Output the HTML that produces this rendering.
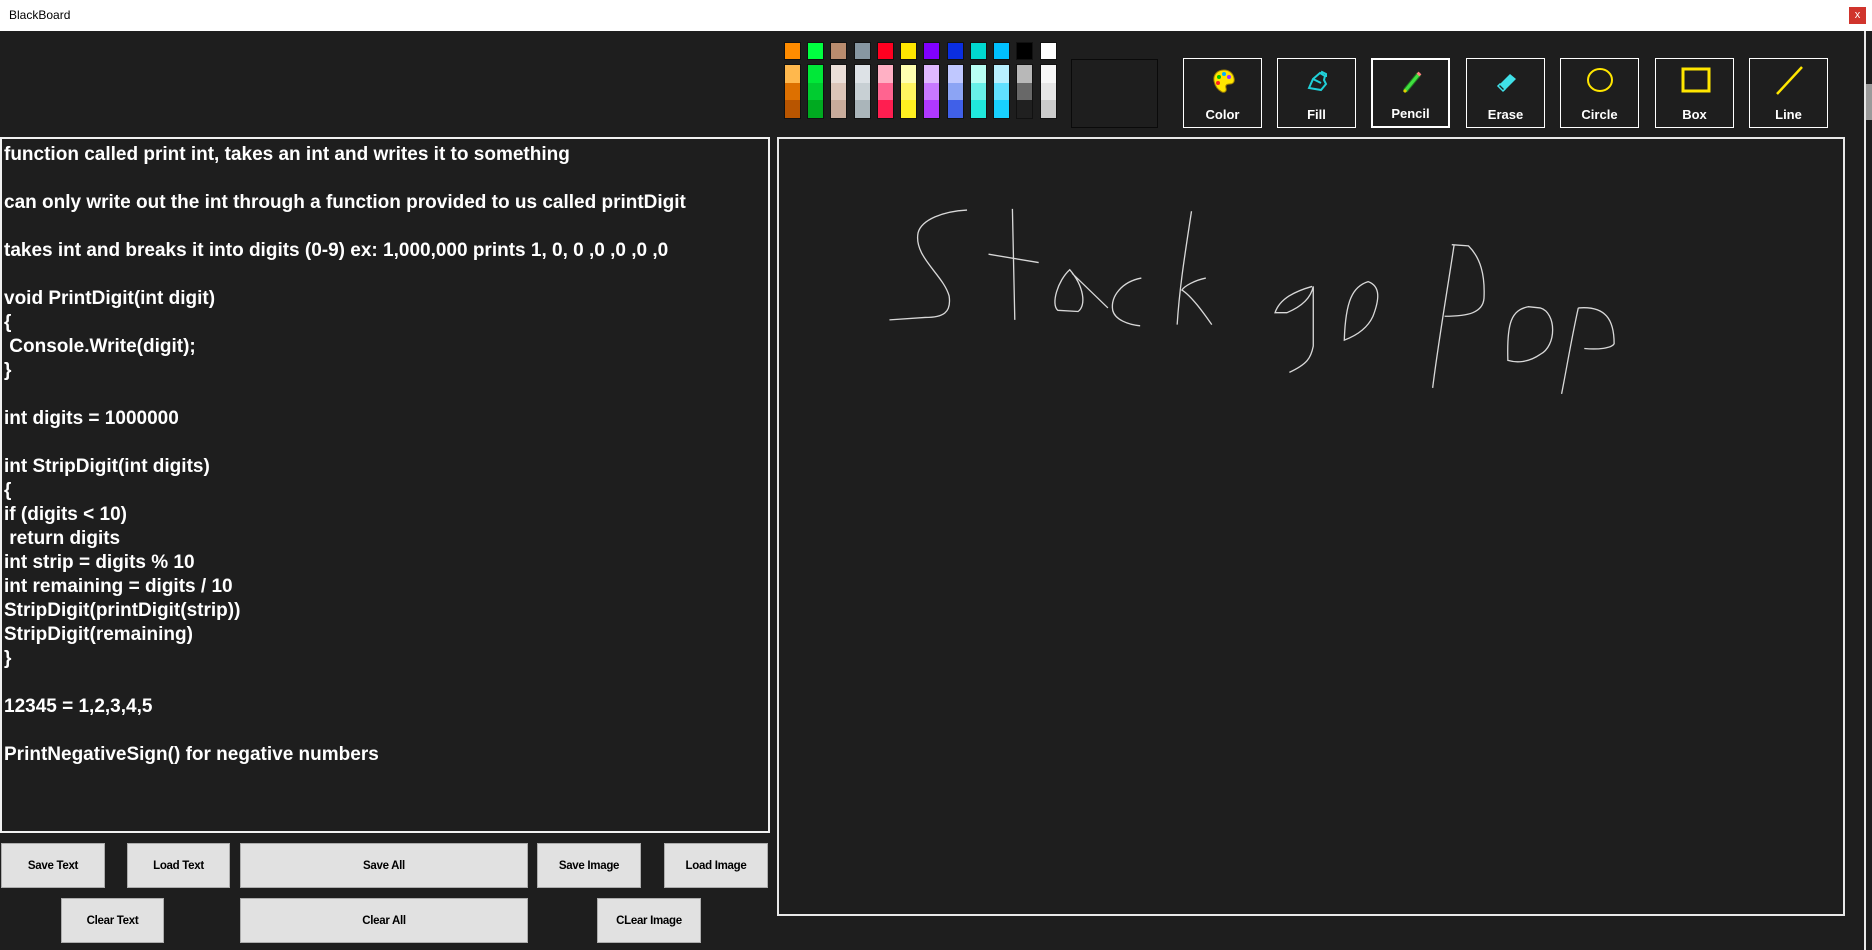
<!DOCTYPE html>
<html><head><meta charset="utf-8"><style>
*{margin:0;padding:0;box-sizing:border-box}
body{width:1872px;height:950px;background:#1e1e1e;position:relative;overflow:hidden;font-family:"Liberation Sans",sans-serif}
.a{position:absolute}
#title{left:0;top:0;width:1872px;height:31px;background:#fff;font-size:12px;color:#000;line-height:31px;padding-left:9px}
#close{left:1849px;top:7px;width:17px;height:17px;background:#d0342c;color:#fff;font-size:11px;line-height:16px;text-align:center}
.sw{position:absolute;width:17px;border:1px solid #111}
.bar{position:absolute;width:17px;height:55px;top:64px;border:1px solid #111;display:flex;flex-direction:column}
.bar i{flex:1;display:block}
.tool{position:absolute;top:58px;width:79px;height:70px;border:1px solid #fff;color:#fff;font-weight:bold;font-size:13px;text-align:center}
.tool span{position:absolute;left:0;right:0;bottom:5px}
.tool svg{position:absolute;left:25px;top:7px}
#txt{left:0;top:137px;width:770px;height:696px;border:2px solid #f0f0f0;color:#fff;font-weight:bold;font-size:19px;line-height:24px;padding:4px 0 0 2px;white-space:pre}
#cv{left:777px;top:137px;width:1068px;height:779px;border:2px solid #e8e8e8}
.btn{position:absolute;background:#e1e1e1;border:1px solid #adadad;font-size:11.5px;font-weight:bold;color:#000;display:flex;align-items:center;justify-content:center;letter-spacing:-0.3px}
</style></head><body>
<div class="a" id="title">BlackBoard</div>
<div class="a" id="close">x</div>

<div class="sw" style="left:784px;top:42px;height:18px;background:#ff8c00"></div>
<div class="sw" style="left:807px;top:42px;height:18px;background:#00ff40"></div>
<div class="sw" style="left:830px;top:42px;height:18px;background:#b98c6e"></div>
<div class="sw" style="left:854px;top:42px;height:18px;background:#8797a2"></div>
<div class="sw" style="left:877px;top:42px;height:18px;background:#ff0020"></div>
<div class="sw" style="left:900px;top:42px;height:18px;background:#ffe600"></div>
<div class="sw" style="left:923px;top:42px;height:18px;background:#8000ff"></div>
<div class="sw" style="left:947px;top:42px;height:18px;background:#0a2ee0"></div>
<div class="sw" style="left:970px;top:42px;height:18px;background:#00d8d0"></div>
<div class="sw" style="left:993px;top:42px;height:18px;background:#00c0ff"></div>
<div class="sw" style="left:1016px;top:42px;height:18px;background:#000"></div>
<div class="sw" style="left:1040px;top:42px;height:18px;background:#fff"></div>

<div class="bar" style="left:784px"><i style="background:#ffb84d"></i><i style="background:#dd7000"></i><i style="background:#b85500"></i></div>
<div class="bar" style="left:807px"><i style="background:#00e838"></i><i style="background:#00cc30"></i><i style="background:#00aa20"></i></div>
<div class="bar" style="left:830px"><i style="background:#ebdfd8"></i><i style="background:#dcc5b8"></i><i style="background:#c8ab9b"></i></div>
<div class="bar" style="left:854px"><i style="background:#dde2e6"></i><i style="background:#c8d0d4"></i><i style="background:#aab5ba"></i></div>
<div class="bar" style="left:877px"><i style="background:#ffb0c4"></i><i style="background:#ff6490"></i><i style="background:#ff1e50"></i></div>
<div class="bar" style="left:900px"><i style="background:#ffffb0"></i><i style="background:#fff560"></i><i style="background:#fff020"></i></div>
<div class="bar" style="left:923px"><i style="background:#e0b8ff"></i><i style="background:#c878ff"></i><i style="background:#b038ff"></i></div>
<div class="bar" style="left:947px"><i style="background:#c0c8ff"></i><i style="background:#8ca4f4"></i><i style="background:#4060e8"></i></div>
<div class="bar" style="left:970px"><i style="background:#b8fff4"></i><i style="background:#68f0e8"></i><i style="background:#20e8dc"></i></div>
<div class="bar" style="left:993px"><i style="background:#b8f0ff"></i><i style="background:#60e0ff"></i><i style="background:#18d0ff"></i></div>
<div class="bar" style="left:1016px"><i style="background:#b8b8b8"></i><i style="background:#686868"></i><i style="background:#202020"></i></div>
<div class="bar" style="left:1040px"><i style="background:#f8f8f8"></i><i style="background:#e6e6e6"></i><i style="background:#cccccc"></i></div>

<div class="a" style="left:1071px;top:59px;width:87px;height:69px;border:1px solid #0a0a0a"></div>

<div class="tool" style="left:1183px"><svg width="30" height="30" viewBox="0 0 30 30"><path d="M15 4C8 4 4 9 5 15c1 5 4 9 8 11 3 1 5-1 4-4s1-4 4-4 5-2 4-6c-1-5-5-8-10-8z" fill="#ffe600" stroke="#a08000" stroke-width="1"/><circle cx="10" cy="11" r="2" fill="#00c000"/><circle cx="15" cy="8" r="2" fill="#00b0ff"/><circle cx="20" cy="11" r="2" fill="#a030ff"/><circle cx="9" cy="17" r="2" fill="#ff2020"/></svg><span>Color</span></div>
<div class="tool" style="left:1277px"><svg width="30" height="30" viewBox="0 0 30 30" fill="none" stroke="#20d0d8" stroke-width="2"><path d="M6 22l4-9 7-6 5 3-1 4 2 4-5 6-6-1z"/><path d="M10 13l8 4M18 8l1-2 4 2 0 3"/></svg><span>Fill</span></div>
<div class="tool" style="left:1371px;border-width:2px"><svg width="30" height="30" viewBox="0 0 30 30"><path d="M7 24L21 7" stroke="#208020" stroke-width="5"/><path d="M7 24L21 7" stroke="#40e040" stroke-width="3"/><path d="M20 8l2-2" stroke="#ff8080" stroke-width="4"/><path d="M6 25l2-2" stroke="#e0d000" stroke-width="3"/></svg><span>Pencil</span></div>
<div class="tool" style="left:1466px"><svg width="30" height="30" viewBox="0 0 30 30"><path d="M6 20l12-12 6 5-12 12z" fill="#40e0e8"/><path d="M6 20l5 5 2-2-5-5z" fill="#1e1e1e" stroke="#40e0e8" stroke-width="1.5"/></svg><span>Erase</span></div>
<div class="tool" style="left:1560px"><svg width="30" height="30" viewBox="0 0 30 30"><ellipse cx="14" cy="14" rx="12" ry="11" fill="none" stroke="#ffe600" stroke-width="2"/></svg><span>Circle</span></div>
<div class="tool" style="left:1655px"><svg width="30" height="30" viewBox="0 0 30 30"><rect x="2" y="3" width="26" height="22" fill="none" stroke="#ffe600" stroke-width="3"/></svg><span>Box</span></div>
<div class="tool" style="left:1749px"><svg width="30" height="30" viewBox="0 0 30 30"><path d="M2 28L27 1" stroke="#ffe600" stroke-width="2.5"/></svg><span>Line</span></div>

<div class="a" id="txt">function called print int, takes an int and writes it to something

can only write out the int through a function provided to us called printDigit

takes int and breaks it into digits (0-9) ex: 1,000,000 prints 1, 0, 0 ,0 ,0 ,0 ,0

void PrintDigit(int digit)
{
 Console.Write(digit);
}

int digits = 1000000

int StripDigit(int digits)
{
if (digits &lt; 10)
 return digits
int strip = digits % 10
int remaining = digits / 10
StripDigit(printDigit(strip))
StripDigit(remaining)
}

12345 = 1,2,3,4,5

PrintNegativeSign() for negative numbers</div>

<div class="a" id="cv"></div>
<svg class="a" style="left:0;top:0" width="1872" height="950" viewBox="0 0 1568 796" preserveAspectRatio="none" fill="none" stroke="#d8d8d8" stroke-width="1.1">
<path d="M810 176C790 177 772 184 769 195C765 215 790 230 795 248C797 262 790 266 775 266L745 268"/>
<path d="M848 175L850 268M828 213L870 220"/>
<path d="M896 226C886 235 880 255 886 260L903 261C910 256 908 240 896 226ZM898 229L928 258"/>
<path d="M956 233C940 236 930 248 932 260C934 268 945 272 955 273"/>
<path d="M998 177C993 210 988 240 986 272M1010 233C1000 235 992 240 990 243C998 248 1008 262 1015 272"/>
<path d="M1099 240C1085 244 1072 250 1068 262L1078 262C1090 257 1098 250 1100 240L1100 290C1098 300 1095 305 1080 312"/>
<path d="M1146 236C1133 240 1127 252 1126 285C1134 282 1145 276 1150 265C1155 252 1157 240 1146 236Z"/>
<path d="M1218 205C1212 245 1205 285 1200 325M1216 205L1230 206C1240 216 1244 230 1243 250C1242 262 1230 265 1210 265"/>
<path d="M1280 257C1266 260 1262 270 1263 302C1270 304 1280 304 1290 297C1304 290 1304 262 1290 258Z"/>
<path d="M1322 258C1316 285 1312 310 1308 330M1322 258C1345 256 1352 268 1352 288C1350 292 1338 293 1327 292"/>
</svg>

<div class="btn" style="left:1px;top:843px;width:104px;height:45px">Save Text</div>
<div class="btn" style="left:127px;top:843px;width:103px;height:45px">Load Text</div>
<div class="btn" style="left:240px;top:843px;width:288px;height:45px">Save All</div>
<div class="btn" style="left:537px;top:843px;width:104px;height:45px">Save Image</div>
<div class="btn" style="left:664px;top:843px;width:104px;height:45px">Load Image</div>
<div class="btn" style="left:61px;top:898px;width:103px;height:45px">Clear Text</div>
<div class="btn" style="left:240px;top:898px;width:288px;height:45px">Clear All</div>
<div class="btn" style="left:597px;top:898px;width:104px;height:45px">CLear Image</div>

<div class="a" style="left:1864px;top:31px;width:2px;height:919px;background:#e8e8e8"></div>
<div class="a" style="left:1866px;top:84px;width:6px;height:36px;background:#9a9a9a"></div>
</body></html>
